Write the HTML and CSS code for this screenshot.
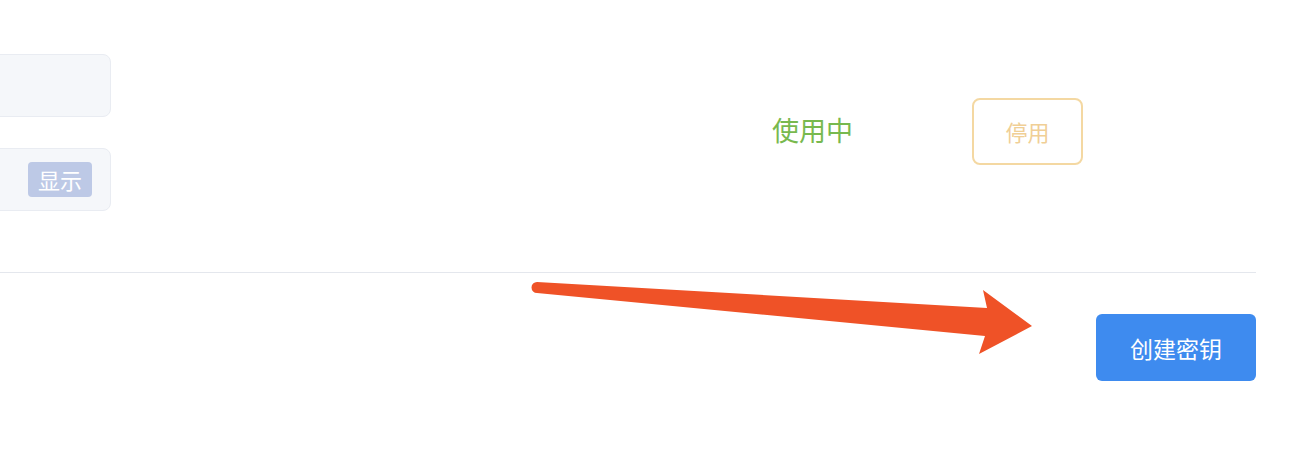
FILE: index.html
```html
<!DOCTYPE html>
<html lang="zh-CN">
<head>
    <meta charset="UTF-8">
    <meta name="viewport" content="width=device-width, initial-scale=1.0">
    <title>密钥管理</title>
    <link rel="stylesheet" href="styles.css">
</head>
<body>
    <div class="panel">
        <div class="key-row">
            <div class="key-fields">
                <div class="field"></div>
                <div class="field">
                    <span class="reveal">显示</span>
                </div>
            </div>
            <div class="key-status">使用中</div>
            <button class="btn-disable">停用</button>
        </div>
        <div class="panel-footer">
            <button class="btn-create">创建密钥</button>
        </div>
    </div>

    <svg class="annotation" width="1304" height="460" viewBox="0 0 1304 460">
        <path d="M537 282 L987 308 L983 290 L1032 326 L979 354 L985 336 L537 293 A5.5 5.5 0 0 1 537 282 Z" fill="#ef5227"/>
    </svg>
</body>
</html>
```

FILE: styles.css
```css
body {
    margin: 0;
    font-family: "Noto Sans CJK SC", "Noto Sans", sans-serif;
    background-color: #ffffff;
    position: relative;
    height: 460px;
    overflow: hidden;
}

.panel {
    width: 1256px;
}

.key-row {
    display: flex;
    align-items: center;
    padding: 54px 0 61px 0;
    border-bottom: 1px solid #e4e7ed;
}

.key-fields {
    display: flex;
    flex-direction: column;
    gap: 31px;
    width: 300px;
    margin-left: -189px;
}

.field {
    height: 61px;
    background-color: #f5f7fa;
    border: 1px solid #e9ecf2;
    border-radius: 8px;
    display: flex;
    align-items: center;
    justify-content: flex-end;
    padding-right: 18px;
}

.reveal {
    background-color: #bdc9e6;
    color: #ffffff;
    font-size: 22px;
    line-height: 35px;
    padding: 0 10px;
    border-radius: 4px;
}

.key-status {
    margin-left: 661px;
    margin-bottom: 6px;
    width: 200px;
    color: #78b94e;
    font-size: 27px;
    line-height: 36px;
}

.btn-disable {
    width: 111px;
    height: 67px;
    margin-bottom: 3px;
    background-color: #ffffff;
    border: 2px solid #f4d8a2;
    border-radius: 8px;
    color: #f0cf96;
    font-family: inherit;
    font-size: 22px;
    padding: 0;
}

.panel-footer {
    display: flex;
    justify-content: flex-end;
    padding-top: 41px;
}

.btn-create {
    width: 160px;
    height: 67px;
    background-color: #3e8bef;
    border: none;
    border-radius: 6px;
    color: #ffffff;
    font-family: inherit;
    font-size: 23px;
    padding: 0;
}

.annotation {
    position: absolute;
    left: 0;
    top: 0;
    pointer-events: none;
}
```
